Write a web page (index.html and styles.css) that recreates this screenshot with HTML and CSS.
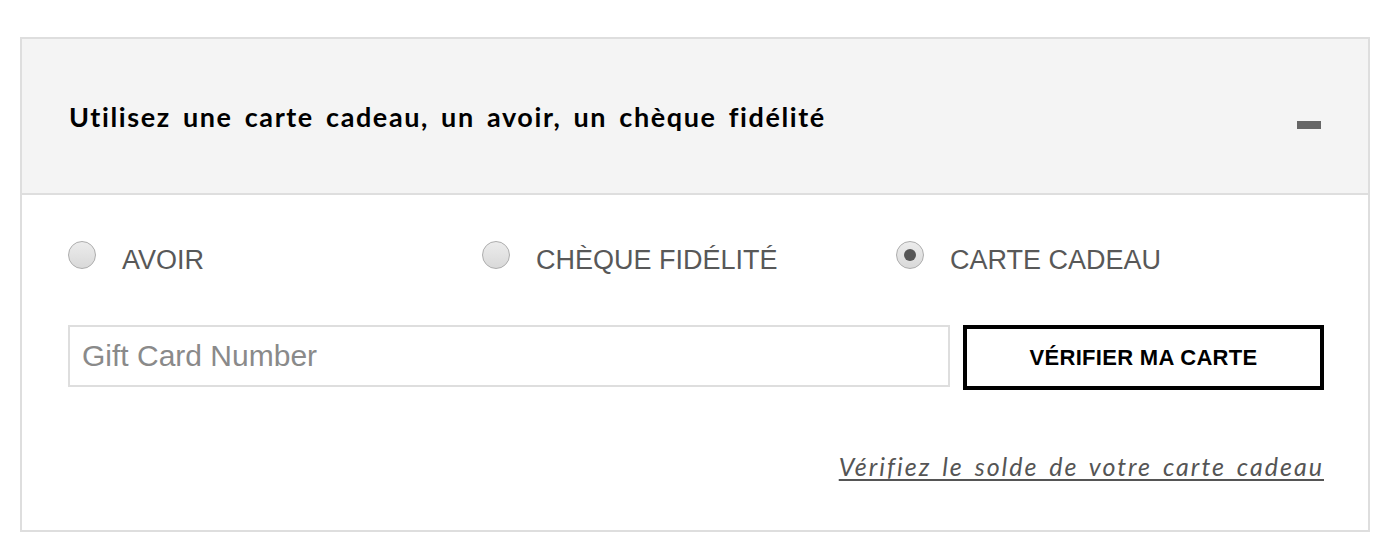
FILE: index.html
```html
<!DOCTYPE html>
<html lang="fr">
<head>
    <meta charset="UTF-8">
    <meta name="viewport" content="width=device-width, initial-scale=1.0">
    <title>Carte cadeau</title>
    <link rel="stylesheet" href="styles.css">
</head>
<body>
    <div class="panel">
        <div class="panel-head">
            <h2>Utilisez une carte cadeau, un avoir, un chèque fidélité</h2>
            <span class="toggle"></span>
        </div>
        <div class="panel-body">
            <div class="choices">
                <label class="choice"><input type="radio" name="type"><span>AVOIR</span></label>
                <label class="choice"><input type="radio" name="type"><span>CHÈQUE FIDÉLITÉ</span></label>
                <label class="choice"><input type="radio" name="type" checked><span>CARTE CADEAU</span></label>
            </div>
            <div class="card-form">
                <input type="text" class="card-number" placeholder="Gift Card Number">
                <button class="check-btn">VÉRIFIER MA CARTE</button>
            </div>
            <div class="balance">
                <a href="#">Vérifiez le solde de votre carte cadeau</a>
            </div>
        </div>
    </div>
</body>
</html>
```

FILE: styles.css
```css
body {
    margin: 0;
    padding: 37px 30px 0 20px;
    font-family: "Liberation Sans", Arial, sans-serif;
    background: #fff;
}

.panel {
    border: 2px solid #dedede;
    width: 1346px;
}

.panel-head {
    background: #f4f4f4;
    height: 154px;
    border-bottom: 2px solid #dedede;
    display: flex;
    align-items: center;
    justify-content: space-between;
    padding: 0 47px 0 46px;
}

.panel-head h2 {
    margin: 0 0 0 1px;
    font-family: "Lato", sans-serif;
    font-weight: 700;
    font-size: 27px;
    letter-spacing: 1.6px;
    word-spacing: 4px;
    color: #000;
}

.toggle {
    width: 24px;
    height: 8px;
    background: #666;
    margin-top: 17px;
}

.panel-body {
    padding: 46px 44px 0 46px;
}

.choices {
    display: flex;
}

.choice {
    width: 414px;
    display: flex;
    align-items: flex-start;
    color: #585858;
    font-size: 27px;
    line-height: 30px;
}

.choice input {
    appearance: none;
    -webkit-appearance: none;
    width: 28px;
    height: 28px;
    margin: 0 26px 0 0;
    border: 1px solid #adadad;
    border-radius: 50%;
    background: linear-gradient(#ececec, #d9d9d9);
    position: relative;
    flex-shrink: 0;
}

.choice input:checked::after {
    content: "";
    position: absolute;
    top: 7px;
    left: 7px;
    width: 12px;
    height: 12px;
    border-radius: 50%;
    background: #555;
}

.choice span {
    margin-top: 4px;
}

.card-form {
    display: flex;
    align-items: flex-start;
    margin-top: 50px;
    gap: 13px;
}

.card-number {
    width: 882px;
    height: 62px;
    box-sizing: border-box;
    border: 2px solid #dedede;
    padding: 0 12px;
    font-family: "Liberation Sans", Arial, sans-serif;
    font-size: 30px;
    color: #333;
    outline: none;
}

.card-number::placeholder {
    color: #8a8a8a;
}

.check-btn {
    width: 361px;
    height: 65px;
    box-sizing: border-box;
    border: 4px solid #000;
    background: #fff;
    font-family: "Liberation Sans", Arial, sans-serif;
    font-weight: 700;
    font-size: 22px;
    letter-spacing: 0.3px;
    color: #000;
    padding: 0;
}

.balance {
    display: flex;
    justify-content: flex-end;
    margin-top: 61px;
    padding-bottom: 49px;
}

.balance a {
    font-family: "Lato", sans-serif;
    font-style: italic;
    font-size: 25px;
    letter-spacing: 2px;
    word-spacing: 3px;
    color: #555;
    text-decoration: underline;
    text-underline-offset: 3px;
}
```
